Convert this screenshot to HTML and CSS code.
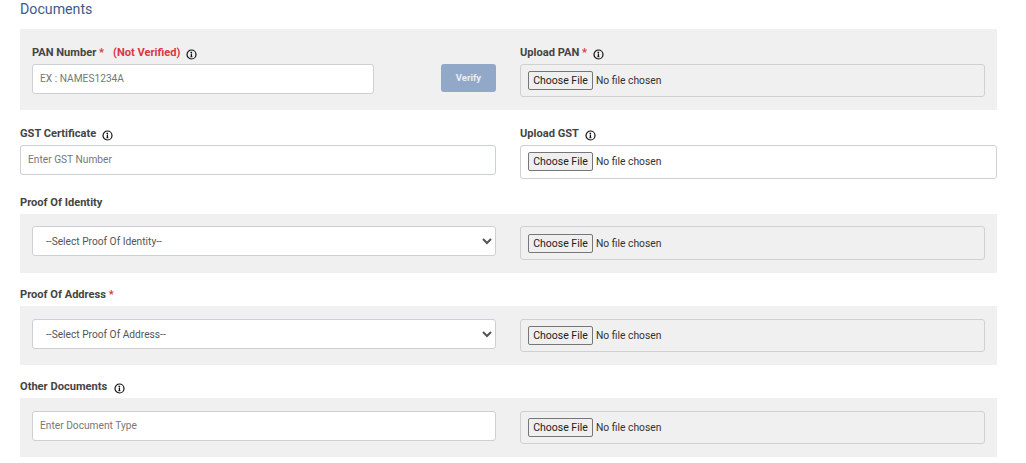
FILE: index.html
```html
<!DOCTYPE html>
<html lang="en">
<head>
<meta charset="utf-8">
<title>Documents</title>
<link rel="stylesheet" href="styles.css">
</head>
<body>
<svg class="defs" width="0" height="0" aria-hidden="true"><symbol id="info" viewBox="0 0 11 11"><circle cx="5.5" cy="5.5" r="4.5" fill="none" stroke="#111" stroke-width="1.2"/><path d="M4.5 3.4h1.6M5.4 4.6v2.6M4.5 7.6h1.8" fill="none" stroke="#111" stroke-width="1.3"/></symbol></svg>
<main class="page">
  <h2 class="title">Documents</h2>

  <section class="row grey first">
    <div class="field">
      <label class="label">PAN Number <span class="req">*</span><span class="status">(Not Verified)</span><svg class="info"><use href="#info"/></svg></label>
      <div class="pan">
        <input class="control pan-input" type="text" placeholder="EX : NAMES1234A">
        <button class="verify" type="button">Verify</button>
      </div>
    </div>
    <div class="field">
      <label class="label">Upload PAN <span class="req">*</span><svg class="info"><use href="#info"/></svg></label>
      <input class="file" type="file">
    </div>
  </section>

  <section class="row plain">
    <div class="field">
      <label class="label">GST Certificate<svg class="info"><use href="#info"/></svg></label>
      <input class="control" type="text" placeholder="Enter GST Number">
    </div>
    <div class="field">
      <label class="label">Upload GST<svg class="info"><use href="#info"/></svg></label>
      <input class="file white" type="file">
    </div>
  </section>

  <h3 class="label head first-head">Proof Of Identity</h3>
  <section class="row grey">
    <select class="control pick"><option>--Select Proof Of Identity--</option></select>
    <input class="file roomy" type="file">
  </section>

  <h3 class="label head">Proof Of Address <span class="req">*</span></h3>
  <section class="row grey tall">
    <select class="control pick"><option>--Select Proof Of Address--</option></select>
    <input class="file" type="file">
  </section>

  <h3 class="label head">Other Documents<svg class="info"><use href="#info"/></svg></h3>
  <section class="row grey tall">
    <input class="control" type="text" placeholder="Enter Document Type">
    <input class="file" type="file">
  </section>
</main>
</body>
</html>
```

FILE: styles.css
```css
* { box-sizing: border-box; }
html, body { margin: 0; background: #fff; }
body { font-family: Roboto, "Liberation Sans", sans-serif; color: #444; overflow: hidden; }
.defs { position: absolute; }
.page { width: 977px; margin-left: 20px; }
.title { margin: 0; height: 29px; padding-top: 1px; font-size: 14.2px; line-height: 16px; font-weight: 400; color: #3d5a8e; }
.row { display: grid; grid-template-columns: 464fr 465fr; column-gap: 24px; align-items: start; }
.grey { background: #f0f0f0; padding: 12px 12px 0; height: 59px; }
.tall { padding-top: 13px; }
.first { height: 81px; padding-top: 16px; }
.plain { grid-template-columns: 476fr 477fr; padding-top: 16px; height: 85px; }
.field { display: flex; flex-direction: column; min-width: 0; }
.label { display: flex; align-items: center; margin: 0 0 4px; padding-top: 1px; height: 15px; font-size: 11.1px; line-height: 14px; font-weight: 700; color: #444; white-space: pre; }
.head { margin: 0; height: 33px; padding-top: 15px; align-items: flex-start; }
.first-head { height: 19px; padding-top: 1px; }
.req { color: #dc3545; }
.status { color: #dc3545; margin-left: 9px; }
.info { width: 11px; height: 11px; margin-left: 6px; margin-top: 2px; flex: none; }
.status + .info { margin-left: 6px; }
.head .info { margin-left: 7px; margin-top: 3px; }
.control { display: block; width: 100%; height: 30px; padding: 0 7px 2px; border: 1px solid #ccd0d4; border-radius: 3px; background: #fff; font: 400 10.2px Roboto, sans-serif; color: #555; outline: 0; }
.control::placeholder { color: #777; opacity: 1; }
.pan { display: flex; align-items: flex-start; justify-content: space-between; }
.pan-input { width: 342px; }
.verify { width: 55px; height: 28px; border: 0; border-radius: 3px; background: #92a8c8; color: #e8edf4; font: 700 9.5px Roboto, sans-serif; padding: 0 0 2px; }
.pick { padding: 0 7px 0 9px; color: #555; font-size: 10.2px; }
.file { display: block; width: 100%; height: 33px; padding: 6px 7px; border: 1px solid #d0d0d0; border-radius: 3px; background: #f0f0f0; font: 400 10.3px Roboto, sans-serif; color: #333; }
.file.white { background: #fff; height: 34px; }
.file.roomy { height: 34px; padding-top: 7px; }
.file::file-selector-button { width: 65px; height: 19px; margin-right: 3px; padding: 0; border: 1px solid #767676; border-radius: 2px; background: #efefef; color: #222; font: 400 10.5px Roboto, sans-serif; }
```
